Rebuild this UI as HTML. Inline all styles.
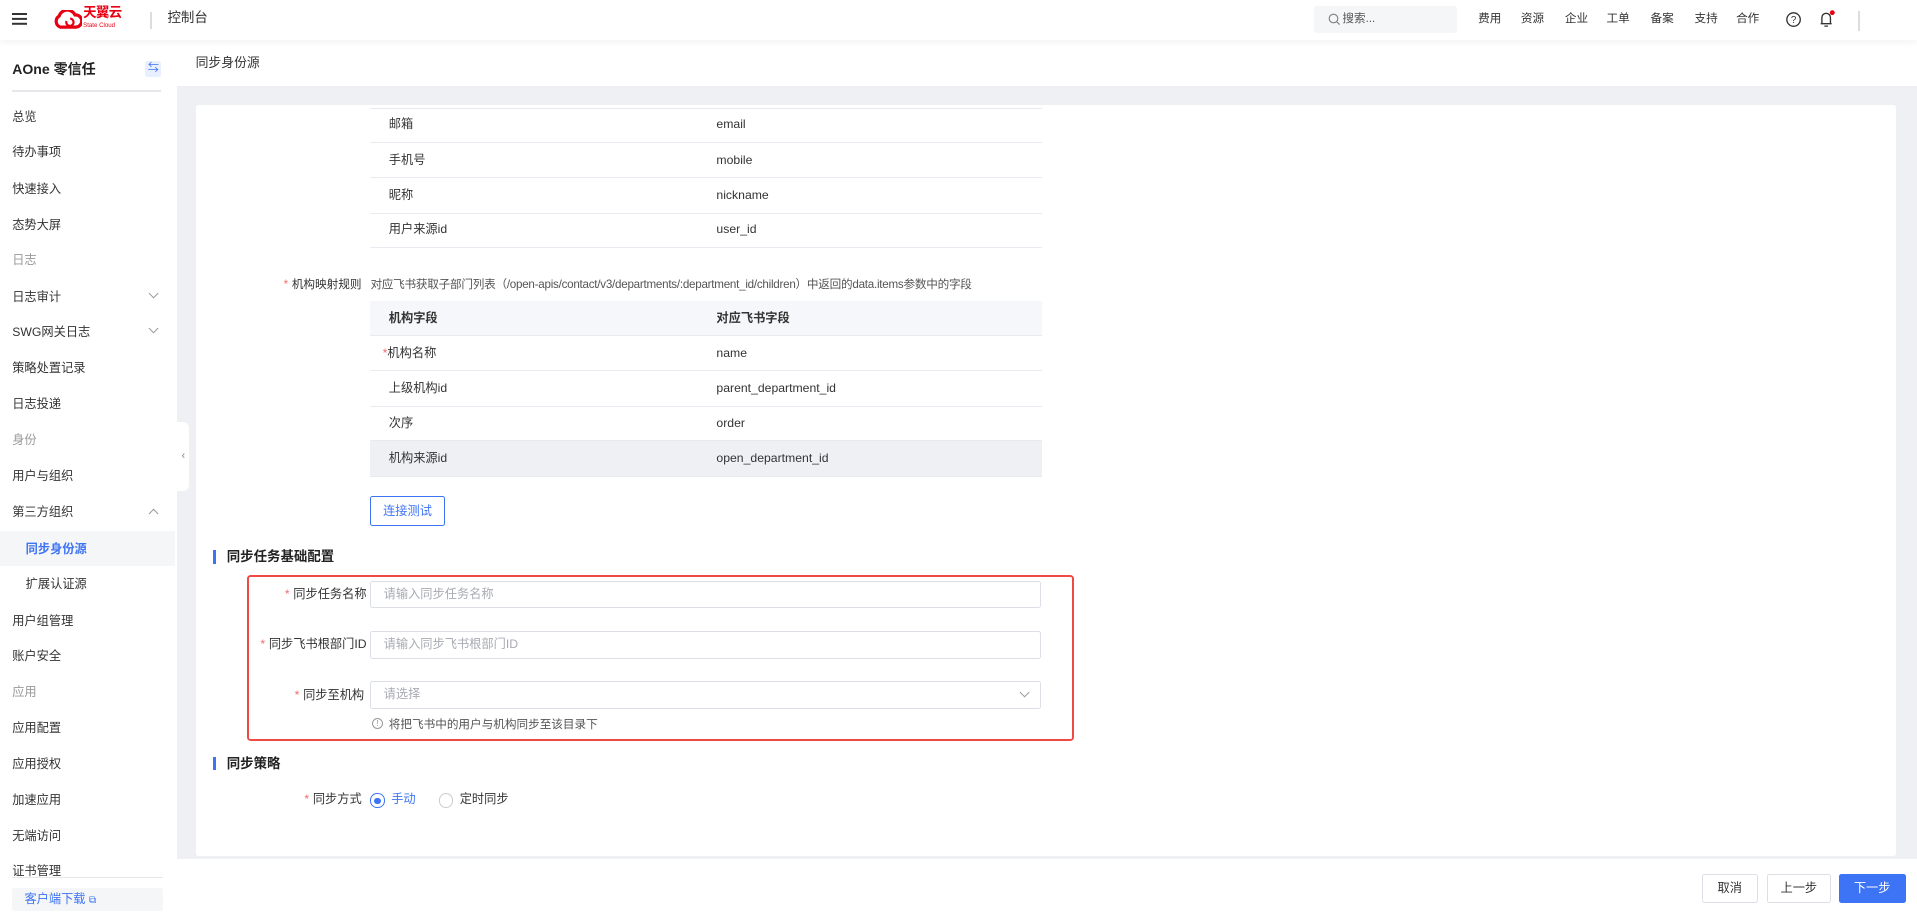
<!DOCTYPE html>
<html><head><meta charset="utf-8"><style>
html,body{margin:0;padding:0;width:1917px;height:914px;overflow:hidden;background:#fff}
#r{zoom:1.2226;width:1568px;height:748px;position:relative;font-family:"Liberation Sans","Noto Sans CJK SC",sans-serif;font-size:10px;line-height:12px;color:#333;background:#eef0f3;overflow:hidden}
.a{position:absolute;white-space:nowrap}
.hdr{left:0;top:0;width:1568px;height:33px;background:#fff;box-shadow:0 2px 6px rgba(0,0,0,.06);z-index:3}
.side{left:0;top:33px;width:145px;height:715px;background:#fff;z-index:2}
.mi{position:absolute;left:10px;font-size:10px;color:#333;top:0}
.gr{color:#999}
.chev{position:absolute;left:123px;width:5px;height:5px;border-right:1px solid #999;border-bottom:1px solid #999}
.tr{position:absolute;left:303px;width:549px;border-bottom:1px solid #e8eaef;height:28px}
.tr span{position:absolute;top:8px;font-size:10px;color:#333}
.st{color:#f56c6c;margin-right:3px}
.inp{position:absolute;left:303px;width:547px;height:21px;border:1px solid #dcdfe6;border-radius:2px;background:#fff}
.inp span{position:absolute;left:10px;top:4px;color:#a8abb2;font-size:10px}
.sec{position:absolute;left:174px;border-left:3px solid #3d73f5;padding-left:9px;font-weight:bold;font-size:11px;color:#222;line-height:11px}
.btn{position:absolute;top:715px;height:22px;border:1px solid #dcdfe6;border-radius:2px;background:#fff;text-align:center;line-height:22px;font-size:10px;color:#333}
</style></head><body><div id="r">
<div class="a hdr">
  <div class="a" style="left:10px;top:11px;width:12px;height:1.5px;background:#333;box-shadow:0 4px 0 #333,0 8px 0 #333"></div>
  <svg class="a" style="left:43px;top:8px" width="24" height="16" viewBox="0 0 24 16"><path d="M6 14 A5 5 0 0 1 5 5 A7 7 0 0 1 18 4 A5 5 0 0 1 19 14 Z" fill="none" stroke="#e60012" stroke-width="2.6"/><path d="M11 9 A3 3 0 1 0 14 7" fill="none" stroke="#e60012" stroke-width="1.8"/></svg>
  <div class="a" style="left:68px;top:5px;font-size:11px;line-height:12px;font-weight:bold;color:#e60012;letter-spacing:-0.5px">天翼云</div>
  <div class="a" style="left:68px;top:18px;font-size:5px;line-height:6px;color:#e60012">State Cloud</div>
  <div class="a" style="left:123px;top:10px;width:1px;height:14px;background:#ddd"></div>
  <div class="a" style="left:137px;top:9px;font-size:11px">控制台</div>
  <div class="a" style="left:1075px;top:5px;width:117px;height:22px;background:#f5f6f8;border-radius:2px">
    <svg class="a" style="left:11px;top:6px" width="10" height="10"><circle cx="4.5" cy="4.5" r="3.5" fill="none" stroke="#888" stroke-width="1"/><path d="M7 7 L9.5 9.5" stroke="#888"/></svg>
    <span class="a" style="left:23px;top:5px;font-size:9.5px;color:#555">搜索...</span></div>
  <div class="a" style="left:1209px;top:10px;font-size:9.5px;color:#333">
    <span class="a" style="left:0">费用</span><span class="a" style="left:35px">资源</span><span class="a" style="left:71px">企业</span><span class="a" style="left:105px">工单</span><span class="a" style="left:141px">备案</span><span class="a" style="left:177px">支持</span><span class="a" style="left:211px">合作</span></div>
  <svg class="a" style="left:1460px;top:9px" width="14" height="14"><circle cx="7" cy="7" r="5.5" fill="none" stroke="#333" stroke-width="1.1"/><text x="7" y="10" font-size="8" text-anchor="middle" fill="#333" font-family="Liberation Sans">?</text></svg>
  <svg class="a" style="left:1486px;top:7px" width="16" height="16"><path d="M4 12 V7 A3.5 3.5 0 0 1 11 7 V12 Z M3 12 H12 M6 14 H9" fill="none" stroke="#333" stroke-width="1.1"/><circle cx="12.5" cy="3" r="2" fill="#e60012"/></svg>
  <div class="a" style="left:1520px;top:9px;width:1px;height:16px;background:#ddd"></div>
</div>
<div class="a side">
  <div class="a" style="left:10px;top:18px;font-size:11.5px;font-weight:bold;color:#222">AOne 零信任</div>
  <div class="a" style="left:119px;top:17px;width:13px;height:13px;background:#e8efff;border-radius:2px;color:#3d73f5;font-size:9px;text-align:center;line-height:13px">⇆</div>
  <div class="a" style="left:10px;top:41px;width:122px;height:1px;background:#e5e7eb"></div>
  <div class="mi" style="top:57px">总览</div>
  <div class="mi" style="top:86px">待办事项</div>
  <div class="mi" style="top:116px">快速接入</div>
  <div class="mi" style="top:145px">态势大屏</div>
  <div class="mi gr" style="top:174px">日志</div>
  <div class="mi" style="top:204px">日志审计</div><div class="chev" style="top:204px;transform:rotate(45deg)"></div>
  <div class="mi" style="top:233px">SWG网关日志</div><div class="chev" style="top:233px;transform:rotate(45deg)"></div>
  <div class="mi" style="top:262px">策略处置记录</div>
  <div class="mi" style="top:292px">日志投递</div>
  <div class="mi gr" style="top:321px">身份</div>
  <div class="mi" style="top:351px">用户与组织</div>
  <div class="mi" style="top:380px">第三方组织</div><div class="chev" style="top:384px;transform:rotate(-135deg)"></div>
  <div class="a" style="left:0;top:401px;width:143px;height:29px;background:#f5f6f8"></div>
  <div class="mi" style="top:410px;left:21px;color:#3d73f5;font-weight:bold">同步身份源</div>
  <div class="mi" style="top:439px;left:21px">扩展认证源</div>
  <div class="mi" style="top:469px">用户组管理</div>
  <div class="mi" style="top:498px">账户安全</div>
  <div class="mi gr" style="top:527px">应用</div>
  <div class="mi" style="top:557px">应用配置</div>
  <div class="mi" style="top:586px">应用授权</div>
  <div class="mi" style="top:616px">加速应用</div>
  <div class="mi" style="top:645px">无端访问</div>
  <div class="mi" style="top:674px">证书管理</div>
  <div class="a" style="left:0;top:684px;width:145px;height:31px;background:#fff"></div>
  <div class="a" style="left:10px;top:684px;width:123px;height:1px;background:#e5e7eb"></div>
  <div class="a" style="left:10px;top:693px;width:123px;height:19px;background:#f5f6f8;border-radius:2px"><span class="a" style="left:10px;top:4px;color:#3d73f5;font-size:10px">客户端下载 <span style="font-size:8px">⧉</span></span></div>
</div>
<div class="a" style="left:145px;top:345px;width:10px;height:57px;background:#fff;border-radius:0 5px 5px 0;z-index:2;color:#888;font-size:9px;line-height:57px;text-align:center">‹</div>
<div class="a" style="left:145px;top:33px;width:1423px;height:37px;background:#fff"><span class="a" style="left:15px;top:13px;font-size:10.5px;color:#333">同步身份源</span></div>
<div class="a" style="left:160px;top:86px;width:1391px;height:614px;background:#fff;border-radius:2px"></div>
<div class="a" style="left:303px;top:88px;width:549px;height:1px;background:#e8eaef"></div>
<div class="tr" style="top:88px"><span style="left:15px">邮箱</span><span style="left:283px">email</span></div>
<div class="tr" style="top:117px"><span style="left:15px">手机号</span><span style="left:283px">mobile</span></div>
<div class="tr" style="top:146px"><span style="left:15px">昵称</span><span style="left:283px">nickname</span></div>
<div class="tr" style="top:174px"><span style="left:15px">用户来源id</span><span style="left:283px">user_id</span></div>
<div class="a" style="left:232px;top:227px;font-size:9.5px"><span class="st">*</span>机构映射规则</div>
<div class="a" style="left:303px;top:227px;font-size:9.5px;color:#555;letter-spacing:-0.2px">对应飞书获取子部门列表（/open-apis/contact/v3/departments/:department_id/children）中返回的data.items参数中的字段</div>
<div class="tr" style="top:246px;background:#f5f7fa"><span style="left:15px;font-weight:bold">机构字段</span><span style="left:283px;font-weight:bold">对应飞书字段</span></div>
<div class="tr" style="top:275px"><span style="left:10px"><b style="color:#f56c6c;font-weight:normal">*</b>机构名称</span><span style="left:283px">name</span></div>
<div class="tr" style="top:304px"><span style="left:15px">上级机构id</span><span style="left:283px">parent_department_id</span></div>
<div class="tr" style="top:332px"><span style="left:15px">次序</span><span style="left:283px">order</span></div>
<div class="tr" style="top:361px;background:#eef0f3"><span style="left:15px">机构来源id</span><span style="left:283px">open_department_id</span></div>
<div class="a" style="left:303px;top:406px;width:59px;height:23px;border:1px solid #3d73f5;border-radius:2px;color:#3d73f5;font-size:10px;text-align:center;line-height:23px">连接测试</div>
<div class="sec" style="top:450px">同步任务基础配置</div>
<div class="a" style="left:202px;top:470px;width:673px;height:133px;border:2px solid #ef4a43;border-radius:3px"></div>
<div class="a" style="left:233px;top:480px"><span class="st">*</span>同步任务名称</div>
<div class="inp" style="top:475px"><span>请输入同步任务名称</span></div>
<div class="a" style="left:213px;top:521px"><span class="st">*</span>同步飞书根部门ID</div>
<div class="inp" style="top:516px"><span>请输入同步飞书根部门ID</span></div>
<div class="a" style="left:241px;top:563px"><span class="st">*</span>同步至机构</div>
<div class="inp" style="top:557px"><span>请选择</span><div class="a" style="left:531px;top:6px;width:5px;height:5px;border-right:1px solid #999;border-bottom:1px solid #999;transform:rotate(45deg)"></div></div>
<div class="a" style="left:304px;top:587px;width:8px;height:8px;border:1px solid #999;border-radius:50%;font-size:7px;color:#999;text-align:center;line-height:8px">!</div>
<div class="a" style="left:318px;top:587px;font-size:9.5px;color:#555">将把飞书中的用户与机构同步至该目录下</div>
<div class="sec" style="top:619px">同步策略</div>
<div class="a" style="left:249px;top:648px"><span class="st">*</span>同步方式</div>
<div class="a" style="left:303px;top:649px;width:10px;height:10px;border:1px solid #3d73f5;border-radius:50%"><div class="a" style="left:2.5px;top:2.5px;width:5px;height:5px;background:#3d73f5;border-radius:50%"></div></div>
<div class="a" style="left:320px;top:648px;color:#3d73f5">手动</div>
<div class="a" style="left:359px;top:649px;width:10px;height:10px;border:1px solid #ccc;border-radius:50%"></div>
<div class="a" style="left:376px;top:648px">定时同步</div>
<div class="a" style="left:145px;top:703px;width:1423px;height:45px;background:#fff"></div>
<div class="btn" style="left:1392px;width:44px">取消</div>
<div class="btn" style="left:1445px;width:51px">上一步</div>
<div class="btn" style="left:1504px;width:53px;background:#3d73f5;border-color:#3d73f5;color:#fff">下一步</div>
</div></body></html>
